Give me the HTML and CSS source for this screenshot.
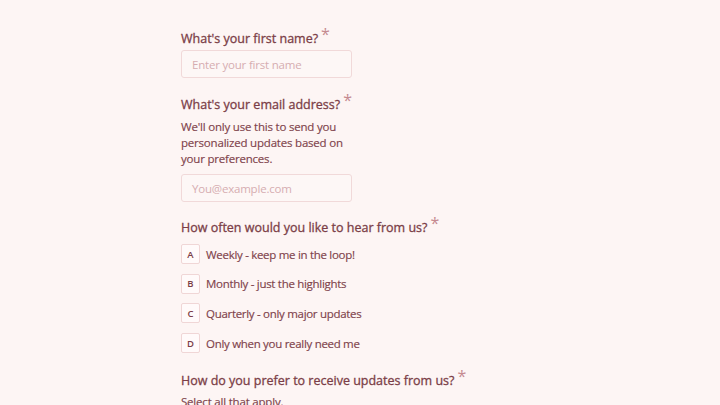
FILE: index.html
```html
<!DOCTYPE html>
<html>
<head>
<meta charset="utf-8">
<link rel="stylesheet" href="styles.css">
</head>
<body>
<main class="form">
  <section class="q q-name">
    <h2 class="label">What's your first name?<span class="req">*</span></h2>
    <div class="input"><span class="ph">Enter your first name</span></div>
  </section>
  <section class="q q-email">
    <h2 class="label">What's your email address?<span class="req">*</span></h2>
    <p class="desc">We'll only use this to send you personalized updates based on your preferences.</p>
    <div class="input"><span class="ph">You@example.com</span></div>
  </section>
  <section class="q q-freq">
    <h2 class="label">How often would you like to hear from us?<span class="req">*</span></h2>
    <ul class="options">
      <li class="opt"><span class="key">A</span><span class="txt">Weekly - keep me in the loop!</span></li>
      <li class="opt"><span class="key">B</span><span class="txt">Monthly - just the highlights</span></li>
      <li class="opt"><span class="key">C</span><span class="txt">Quarterly - only major updates</span></li>
      <li class="opt"><span class="key">D</span><span class="txt">Only when you really need me</span></li>
    </ul>
  </section>
  <section class="q q-channel">
    <h2 class="label">How do you prefer to receive updates from us?<span class="req">*</span></h2>
    <p class="desc desc-short">Select all that apply.</p>
  </section>
</main>
</body>
</html>
```
FILE: styles.css
```css
html, body {
  margin: 0;
  padding: 0;
  background: #fdf5f4;
  height: 405px;
  overflow: hidden;
}
body {
  font-family: "Open Sans", "Liberation Sans", sans-serif;
  color: #7b3e47;
}
.form {
  margin-left: 181px;
  padding-top: 28px;
  display: flex;
  flex-direction: column;
}
.q {
  display: flex;
  flex-direction: column;
}
.q-email { margin-top: 16px; }
.q-freq { margin-top: 15px; }
.q-channel { margin-top: 17px; }
.label {
  margin: 0;
  padding-top: 1px;
  font-size: 12.5px;
  font-weight: 400;
  -webkit-text-stroke: 0.3px #7b3e47;
  line-height: 20px;
  color: #7b3e47;
  white-space: nowrap;
}
.req {
  font-size: 16px;
  font-weight: 400;
  color: #c58a90;
  -webkit-text-stroke: 0;
  margin-left: 3px;
  position: relative;
  top: -3px;
  line-height: 0;
}
.input {
  margin-top: 1px;
  width: 159px;
  height: 26px;
  border: 1px solid #f1d9d9;
  border-radius: 3px;
  background: #fdf7f6;
  display: flex;
  align-items: center;
  padding-left: 10px;
}
.ph {
  font-size: 11.5px;
  letter-spacing: -0.2px;
  color: #d6adb1;
}
.desc {
  margin: 4px 0 0 0;
  width: 172px;
  font-size: 11.5px;
  letter-spacing: -0.2px;
  line-height: 16px;
  color: #7f434b;
  -webkit-text-stroke: 0.15px #7f434b;
}
.desc-short { margin-top: 3px; }
.q-email .input { margin-top: 7px; }
.options {
  list-style: none;
  margin: 6px 0 0 0;
  padding: 0;
  display: flex;
  flex-direction: column;
  gap: 9.7px;
}
.opt {
  display: flex;
  align-items: center;
  gap: 6px;
  height: 20px;
}
.key {
  width: 17px;
  height: 18px;
  border: 1px solid #f0d6d6;
  border-radius: 2px;
  background: #fffafa;
  font-size: 9.5px;
  font-weight: 600;
  display: flex;
  align-items: center;
  justify-content: center;
  color: #7b3e47;
}
.txt {
  font-size: 11.5px;
  letter-spacing: -0.3px;
  color: #7f434b;
  -webkit-text-stroke: 0.15px #7f434b;
}
```
